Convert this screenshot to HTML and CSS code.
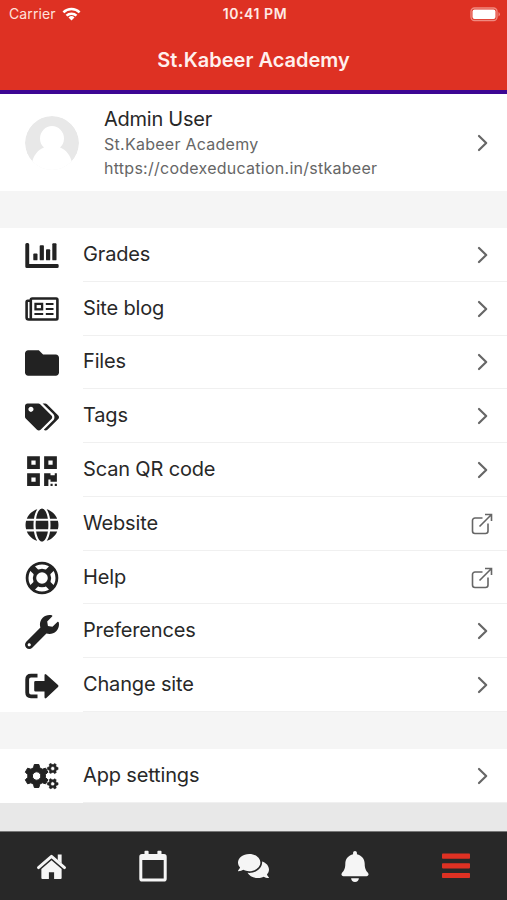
FILE: index.html
```html
<!DOCTYPE html>
<html lang="en">
<head>
<meta charset="utf-8">
<meta name="viewport" content="width=device-width">
<title>St.Kabeer Academy</title>
<link rel="stylesheet" href="styles.css">
</head>
<body>
<svg class="defs" width="0" height="0">
  <symbol id="chevron" viewBox="0 0 12 18"><path d="M2 2l7.2 7L2 16" fill="none" stroke="#666" stroke-width="2.2" stroke-linecap="round" stroke-linejoin="round"/></symbol>
  <symbol id="external" viewBox="0 0 22 22"><path d="M11.500 5H4a2.500 2.500 0 0 0-2.500 2.500V18A2.500 2.500 0 0 0 4 20.500h10.500A2.500 2.500 0 0 0 17 18v-7.500M8.500 13.500L20 2M14 1.500h6.500V8" fill="none" stroke="#666" stroke-width="1.600"/></symbol>
</svg>
<div class="app">
  <header class="header">
    <div class="status">
      <div class="carrier"><span class="carrier-name">Carrier</span>
        <svg class="wifi" viewBox="0 0 18 14"><g fill="none" stroke="#fff" stroke-width="2.500"><path d="M.9 5.300a11.600 11.600 0 0 1 16.200 0M4 8.700a7.200 7.200 0 0 1 10 0"/></g><path d="M9 13.500l-3-3a4.300 4.300 0 0 1 6 0z" fill="#fff"/></svg>
      </div>
      <span class="clock">10:41 PM</span>
      <svg class="battery" viewBox="0 0 31 15"><rect x="1" y="1" width="26" height="12.500" rx="3.500" fill="none" stroke="#f08a80" stroke-width="1.300"/><rect x="2.500" y="2.500" width="23" height="9.500" rx="2" fill="#fff"/><path d="M28.500 5v4.500a2.500 2.500 0 0 0 0-4.500z" fill="#f08a80"/></svg>
    </div>
    <h1 class="title">St.Kabeer Academy</h1>
  </header>
  <main class="content">
    <section class="profile">
      <svg class="avatar" viewBox="0 0 54 54"><circle cx="27" cy="27" r="27" fill="#e8e8e8"/><path d="M15 22.500a12 12.500 0 0 1 24 0c0 4-1.500 7-4 9 6 2 10.500 8 12 15L43 54H11l-4-7.500c1.500-7 6-13 12-15-2.500-2-4-5-4-9z" fill="#fff"/></svg>
      <div class="who"><div class="name">Admin User</div><div class="site">St.Kabeer Academy</div><div class="url">https://codexeducation.in/stkabeer</div></div>
      <svg class="chevron"><use href="#chevron"/></svg>
    </section>
    <nav class="list">
      <a class="row"><svg class="icon" viewBox="0 0 36 36"><path d="M1.300 7.500a1.500 1.500 0 0 1 1.500-1.500h.9a1.500 1.500 0 0 1 1.500 1.500V27h28a1.500 1.500 0 0 1 1.500 1.500v1a1.500 1.500 0 0 1-1.500 1.500H2.800a1.500 1.500 0 0 1-1.500-1.500z"/><rect x="9.300" y="16.500" width="4.200" height="6.800" rx=".9"/><rect x="15.700" y="8.200" width="4.200" height="15.100" rx=".9"/><rect x="22" y="12.300" width="4.200" height="11" rx=".9"/><rect x="28.300" y="6.300" width="4.200" height="17" rx=".9"/></svg><span class="label">Grades</span><svg class="chevron"><use href="#chevron"/></svg></a>
      <a class="row"><svg class="icon" viewBox="0 0 36 36"><g fill="none" stroke="#222" stroke-width="2.600"><path d="M6.800 27.500V9q0-1.500 1.500-1.500h23.900q1.200 0 1.200 1.200v18.600q0 1.200-1.200 1.200H4.800q-2.200 0-2.200-2V11q0-1.200 1.200-1.200h2.700"/><rect x="11.500" y="12.900" width="6.600" height="5.400" stroke-width="2.300"/><path d="M21.800 13h7.700M21.800 18h7.700M10.400 23h8.800M21.800 23h7.700" stroke-width="2.200"/></g></svg><span class="label">Site blog</span><svg class="chevron"><use href="#chevron"/></svg></a>
      <a class="row"><svg class="icon fa low" viewBox="0 0 512 512"><path d="M464 128H272l-64-64H48C21.490 64 0 85.490 0 112v288c0 26.510 21.490 48 48 48h416c26.510 0 48-21.490 48-48V176c0-26.510-21.490-48-48-48z"/></svg><span class="label">Files</span><svg class="chevron"><use href="#chevron"/></svg></a>
      <a class="row"><svg class="icon fa low" viewBox="0 0 640 512"><path d="M497.941 225.941L286.059 14.059A48 48 0 0 0 252.118 0H48C21.490 0 0 21.490 0 48v204.118a48 48 0 0 0 14.059 33.941l211.882 211.882c18.744 18.745 49.136 18.746 67.882 0l204.118-204.118c18.745-18.745 18.745-49.137 0-67.882zM112 160c-26.510 0-48-21.490-48-48s21.490-48 48-48 48 21.490 48 48-21.490 48-48 48zm513.941 133.823L421.823 497.941c-18.745 18.745-49.137 18.745-67.882 0l-.36-.36L527.640 323.522c16.999-16.999 26.360-39.600 26.360-63.640s-9.362-46.641-26.360-63.640L331.397 0h48.721a48 48 0 0 1 33.941 14.059l211.882 211.882c18.745 18.745 18.745 49.137 0 67.882z"/></svg><span class="label">Tags</span><svg class="chevron"><use href="#chevron"/></svg></a>
      <a class="row"><svg class="icon fa low" viewBox="0 0 448 512"><path d="M0 224h192V32H0v192zM64 96h64v64H64V96zm192-64v192h192V32H256zm128 128h-64V96h64v64zM0 480h192V288H0v192zm64-128h64v64H64v-64zm352-64h32v128h-96v-32h-32v96h-64V288h96v32h64v-32zm0 160h32v32h-32v-32zm-64 0h32v32h-32v-32z"/></svg><span class="label">Scan QR code</span><svg class="chevron"><use href="#chevron"/></svg></a>
      <a class="row"><svg class="icon fa low" viewBox="0 0 496 512"><path d="M336.500 160C322 70.700 287.800 8 248 8s-74 62.700-88.500 152h177zM152 256c0 22.200 1.200 43.500 3.300 64h185.300c2.100-20.500 3.300-41.800 3.300-64s-1.200-43.500-3.300-64H155.300c-2.100 20.500-3.300 41.800-3.300 64zm324.700-96c-28.600-67.900-86.500-120.400-158-141.600 24.400 33.800 41.200 84.700 50 141.600h108zM177.200 18.400C105.800 39.600 47.800 92.100 19.300 160h108c8.700-56.900 25.500-107.800 49.900-141.600zM487.400 192H372.700c2.100 21 3.300 42.500 3.300 64s-1.200 43-3.300 64h114.600c5.500-20.500 8.600-41.800 8.600-64s-3.100-43.500-8.500-64zM120 256c0-21.500 1.200-43 3.300-64H8.600C3.200 212.500 0 233.800 0 256s3.200 43.500 8.600 64h114.600c-2-21-3.200-42.500-3.200-64zm39.500 96c14.500 89.300 48.700 152 88.500 152s74-62.700 88.500-152h-177zm159.300 141.600c71.400-21.200 129.400-73.700 158-141.600h-108c-8.800 56.900-25.600 107.800-50 141.600zM19.300 352c28.600 67.900 86.500 120.400 158 141.600-24.400-33.800-41.200-84.700-50-141.600h-108z"/></svg><span class="label">Website</span><svg class="external"><use href="#external"/></svg></a>
      <a class="row"><svg class="icon" viewBox="0 0 36 36"><g fill="none" stroke="#222"><circle cx="18" cy="18" r="14.900" stroke-width="2.800"/><circle cx="18" cy="18" r="7.500" stroke-width="3.400"/><path d="M8 8l4.800 4.800M28 8l-4.800 4.800M8 28l4.800-4.800M28 28l-4.800-4.800" stroke-width="6.500"/></g></svg><span class="label">Help</span><svg class="external"><use href="#external"/></svg></a>
      <a class="row"><svg class="icon fa low" viewBox="0 0 512 512"><path d="M507.730 109.100c-2.240-9.030-13.540-12.090-20.120-5.510l-74.360 74.360-67.880-11.310-11.310-67.880 74.360-74.360c6.620-6.620 3.430-17.900-5.660-20.160-47.380-11.740-99.550.91-136.580 37.930-39.640 39.640-50.550 97.100-34.050 147.200L18.740 402.760c-24.990 24.990-24.990 65.510 0 90.500 24.990 24.990 65.510 24.990 90.500 0l213.210-213.210c50.120 16.710 107.470 5.680 147.370-34.220 37.070-37.070 49.700-89.320 37.910-136.730zM64 472c-13.250 0-24-10.750-24-24 0-13.260 10.750-24 24-24s24 10.740 24 24c0 13.250-10.750 24-24 24z"/></svg><span class="label">Preferences</span><svg class="chevron"><use href="#chevron"/></svg></a>
      <a class="row"><svg class="icon low" viewBox="0 0 36 36"><path d="M13.500 7.700H7Q3.200 7.700 3.200 11.500v13q0 3.800 3.800 3.800h6.500" fill="none" stroke="#222" stroke-width="3.800"/><path d="M10.200 14.300q0-1.300 1.300-1.300h9V7.500q0-2.500 1.800-.9L34 16.900q1 1.100 0 2.200L22.300 30q-1.800 1.300-1.800-1v-5.500h-9q-1.300 0-1.300-1.300z"/></svg><span class="label">Change site</span><svg class="chevron"><use href="#chevron"/></svg></a>
    </nav>
    <nav class="list settings">
      <a class="row"><svg class="icon" viewBox="0 0 36 36"><defs><path id="gear" d="M-2.300-11.500h4.600l.8 3.300 2.600 1.400 3.300-1 2.300 4-2.500 2.300v3l2.500 2.300-2.300 4-3.300-1-2.600 1.400-.8 3.300h-4.600l-.8-3.300-2.600-1.400-3.300 1-2.300-4 2.500-2.300v-3l-2.500-2.300 2.300-4 3.300 1 2.600-1.400zM0-4.200a4.200 4.200 0 1 0 0 8.400 4.200 4.200 0 1 0 0-8.400z" fill-rule="evenodd" stroke="#222" stroke-linejoin="round"/></defs><use href="#gear" transform="translate(12.600 18)"/><use href="#gear" transform="translate(28.700 10.500) rotate(30) scale(.46)"/><use href="#gear" transform="translate(28.700 25.800) rotate(30) scale(.46)"/></svg><span class="label">App settings</span><svg class="chevron"><use href="#chevron"/></svg></a>
    </nav>
  </main>
  <footer class="tabs">
    <a class="tab"><svg class="home" viewBox="0 0 32 28"><path d="M2.500 15.200L16 3.500l13.500 11.700" fill="none" stroke="#f5f5f5" stroke-width="3" stroke-linecap="round" stroke-linejoin="round"/><path d="M22.500 1.500h4V11l-4-3.500zM5.500 16.500L16 7.500l10.500 9V26a1 1 0 0 1-1 1h-6.800v-7h-5.400v7H6.500a1 1 0 0 1-1-1z"/></svg></a>
    <a class="tab"><svg class="calendar" viewBox="0 0 28 32"><path d="M5.500 4V1.500Q5.500.7 6.300.7h2.500q.8 0 .8.800V4h8.800V1.500q0-.8.8-.8h2.500q.8 0 .8.800V4H25q2.700 0 2.700 2.700v22Q27.700 31.500 25 31.500H3Q.3 31.500.3 28.700v-22Q.3 4 3 4zm-2.200 6v18.500h21.400V10z" fill-rule="evenodd"/></svg></a>
    <a class="tab"><svg class="comments" viewBox="0 0 576 512"><path d="M416 192c0-88.400-93.100-160-208-160S0 103.600 0 192c0 34.300 14.100 65.900 38 92-13.400 30.200-35.500 54.200-35.800 54.500-2.200 2.300-2.800 5.700-1.500 8.700S4.800 352 8 352c36.600 0 66.900-12.300 88.700-25 32.200 15.700 70.300 25 111.300 25 114.900 0 208-71.600 208-160zm122 220c23.900-26 38-57.700 38-92 0-66.900-53.500-124.200-129.300-148.100.9 6.600 1.300 13.300 1.300 20.100 0 105.900-107.700 192-240 192-10.800 0-21.300-.8-31.700-1.900C207.800 439.600 281.800 480 368 480c41 0 79.100-9.200 111.300-25 21.800 12.700 52.100 25 88.700 25 3.200 0 6.100-1.900 7.300-4.800 1.300-2.900.7-6.300-1.500-8.700-.3-.2-22.400-24.200-35.800-54.500z"/></svg></a>
    <a class="tab"><svg class="bell" viewBox="0 0 448 512"><path d="M224 512c35.320 0 63.970-28.650 63.970-64H160.030c0 35.350 28.650 64 63.970 64zm215.390-149.710c-19.320-20.760-55.470-51.990-55.470-154.290 0-77.700-54.480-139.900-127.940-155.160V32c0-17.670-14.320-32-31.980-32s-31.980 14.330-31.980 32v20.840C118.560 68.100 64.080 130.300 64.080 208c0 102.300-36.150 133.530-55.470 154.290-6 6.450-8.660 14.160-8.610 21.710.11 16.400 12.980 32 32.100 32h383.800c19.120 0 32-15.600 32.100-32 .05-7.550-2.610-15.270-8.610-21.710z"/></svg></a>
    <a class="tab"><svg class="menu" viewBox="0 0 28 26"><rect y=".5" width="28" height="5.200" rx=".8"/><rect y="10.200" width="28" height="5.200" rx=".8"/><rect y="19.900" width="28" height="5.200" rx=".8"/></svg></a>
  </footer>
</div>
</body>
</html>
```
FILE: styles.css
```css
* { box-sizing: border-box; }
body { margin: 0; font-family: Inter, "Liberation Sans", sans-serif; color: #282828; }
.defs { display: block; height: 0; }
.app { display: flex; flex-direction: column; width: 507px; height: 900px; overflow: hidden; background: #e8e8e8; }
.header { height: 94px; flex: none; background: #de3123; border-bottom: 4px solid #3d0693; color: #fff; }
.status { display: grid; grid-template-columns: 1fr auto 1fr; align-items: center; height: 28px; padding: 0 6px 0 9px; }
.carrier { display: flex; align-items: center; gap: 6px; color: #ffe1dc; }
.carrier-name { font-size: 14px; line-height: 20px; letter-spacing: .12px; }
.wifi { width: 19px; height: 14px; }
.clock { font-size: 14px; font-weight: 600; letter-spacing: .55px; line-height: 20px; color: #ffe9e5; }
.battery { width: 31px; height: 15px; justify-self: end; }
.title { margin: 18px 0 0; font-size: 20px; line-height: 28px; font-weight: 600; text-align: center; color: #fff0ed; }
.content { flex: 1; background: linear-gradient(#f5f5f5 0 680px, #e8e8e8 680px); }
.profile { display: flex; align-items: center; height: 97px; padding: 0 18px 0 25px; background: #fff; }
.avatar { width: 54px; height: 54px; border-radius: 50%; }
.who { flex: 1; margin-left: 25px; white-space: nowrap; }
.name { font-size: 20px; line-height: 26px; letter-spacing: -.25px; }
.site, .url { font-size: 16px; line-height: 24px; letter-spacing: .26px; color: #666; }
.chevron { width: 12px; height: 18px; flex: none; }
.external { width: 22px; height: 22px; flex: none; margin-right: -4px; }
.list { display: flex; flex-direction: column; height: 484px; margin-top: 37px; background: #fff; }
.settings { height: 54px; }
.row { position: relative; display: flex; flex: 1; align-items: center; padding: 0 18px 0 24px; }
.row::after { content: ""; position: absolute; left: 83px; right: 0; bottom: 0; height: 1px; background: #f0f0f0; }
.icon { width: 36px; height: 36px; flex: none; fill: #222; }
.icon.fa { padding: 1px; }
.icon.low { margin-top: 2px; }
.label { flex: 1; margin-left: 23px; padding-bottom: 2px; font-size: 20px; line-height: 28px; letter-spacing: -.16px; }
.tabs { display: flex; height: 69px; flex: none; background: #282828; border-top: 1px solid #777; }
.tab { flex: 1; display: flex; align-items: center; justify-content: center; fill: #f5f5f5; }
.home { width: 31px; height: 27px; margin-left: 2px; }
.calendar { width: 28px; height: 32px; margin-left: 2px; }
.comments { width: 31px; height: 28px; }
.bell { width: 28px; height: 31px; }
.menu { width: 28px; height: 26px; fill: #de3123; }
```
